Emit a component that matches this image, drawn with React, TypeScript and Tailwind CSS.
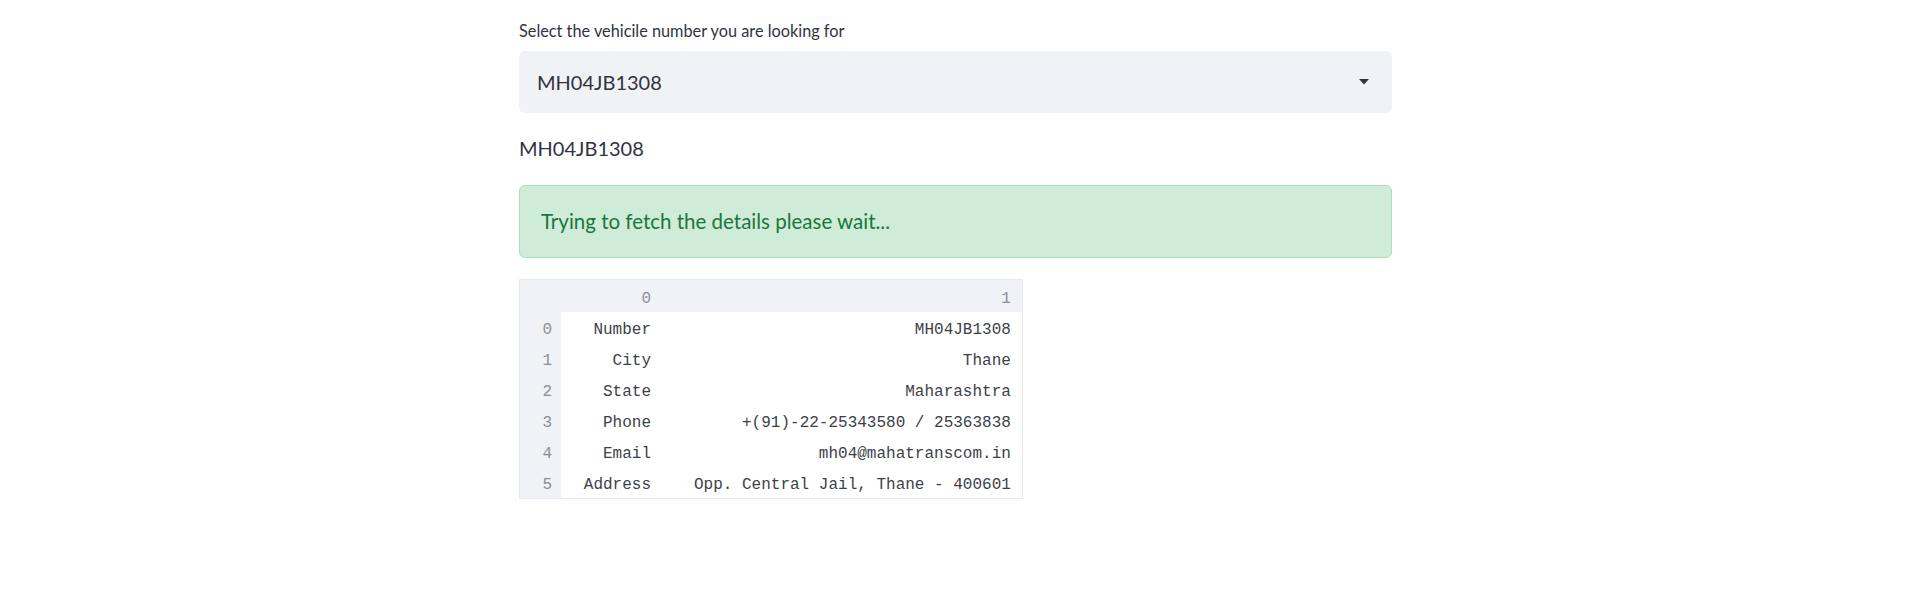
const rows: [string, string][] = [
  ["Number", "MH04JB1308"],
  ["City", "Thane"],
  ["State", "Maharashtra"],
  ["Phone", "+(91)-22-25343580 / 25363838"],
  ["Email", "mh04@mahatranscom.in"],
  ["Address", "Opp. Central Jail, Thane - 400601"],
];

function DataTable() {
  return (
    <div className="inline-block border border-[#e6e9ef] font-['Liberation_Mono',monospace] text-[16px]">
      <table className="border-collapse">
        <thead>
          <tr className="h-[32px] bg-[#f0f2f6] text-[#8c8e96]">
            <th className="w-[41px] font-normal"></th>
            <th className="w-[102px] pr-[12px] pt-[5px] text-right font-normal">0</th>
            <th className="pl-[31px] pr-[11px] pt-[5px] text-right font-normal">1</th>
          </tr>
        </thead>
        <tbody>
          {rows.map(([k, v], i) => (
            <tr key={k} className="h-[31px]">
              <td className="bg-[#f0f2f6] pr-[9px] pt-[5px] text-right text-[#8c8e96]">
                {i}
              </td>
              <td className="pr-[12px] pt-[5px] text-right text-[#3d3f4a]">{k}</td>
              <td className="pl-[31px] pr-[11px] pt-[5px] text-right text-[#3d3f4a]">
                {v}
              </td>
            </tr>
          ))}
        </tbody>
      </table>
    </div>
  );
}

export default function App() {
  const selected = "MH04JB1308";

  return (
    <div className="min-h-[602px] bg-white font-['Lato','Noto_Sans',sans-serif] text-[#31333f]">
      <div className="ml-[519px] w-[873px] pt-[17px]">
        <p className="text-[16.3px] leading-[28px]">
          Select the vehicile number you are looking for
        </p>
        <div className="mt-[6px] flex h-[62px] items-center justify-between rounded-[6px] bg-[#f0f2f6] pl-[18px] pr-[23px]">
          <span className="text-[20px]">{selected}</span>
          <svg width="10" height="6" viewBox="0 0 10 6">
            <path d="M0 0h10L5 5.5z" fill="#31333f" />
          </svg>
        </div>
        <p className="mt-[19px] text-[20px] leading-[32px]">{selected}</p>
        <div className="mt-[21px] flex h-[73px] items-center rounded-[6px] border border-[#abdfba] bg-[#cfecd8] px-[21px] text-[20.5px] text-[#1b7540]">
          Trying to fetch the details please wait...
        </div>
        <div className="mt-[21px]">
          <DataTable />
        </div>
      </div>
    </div>
  );
}
